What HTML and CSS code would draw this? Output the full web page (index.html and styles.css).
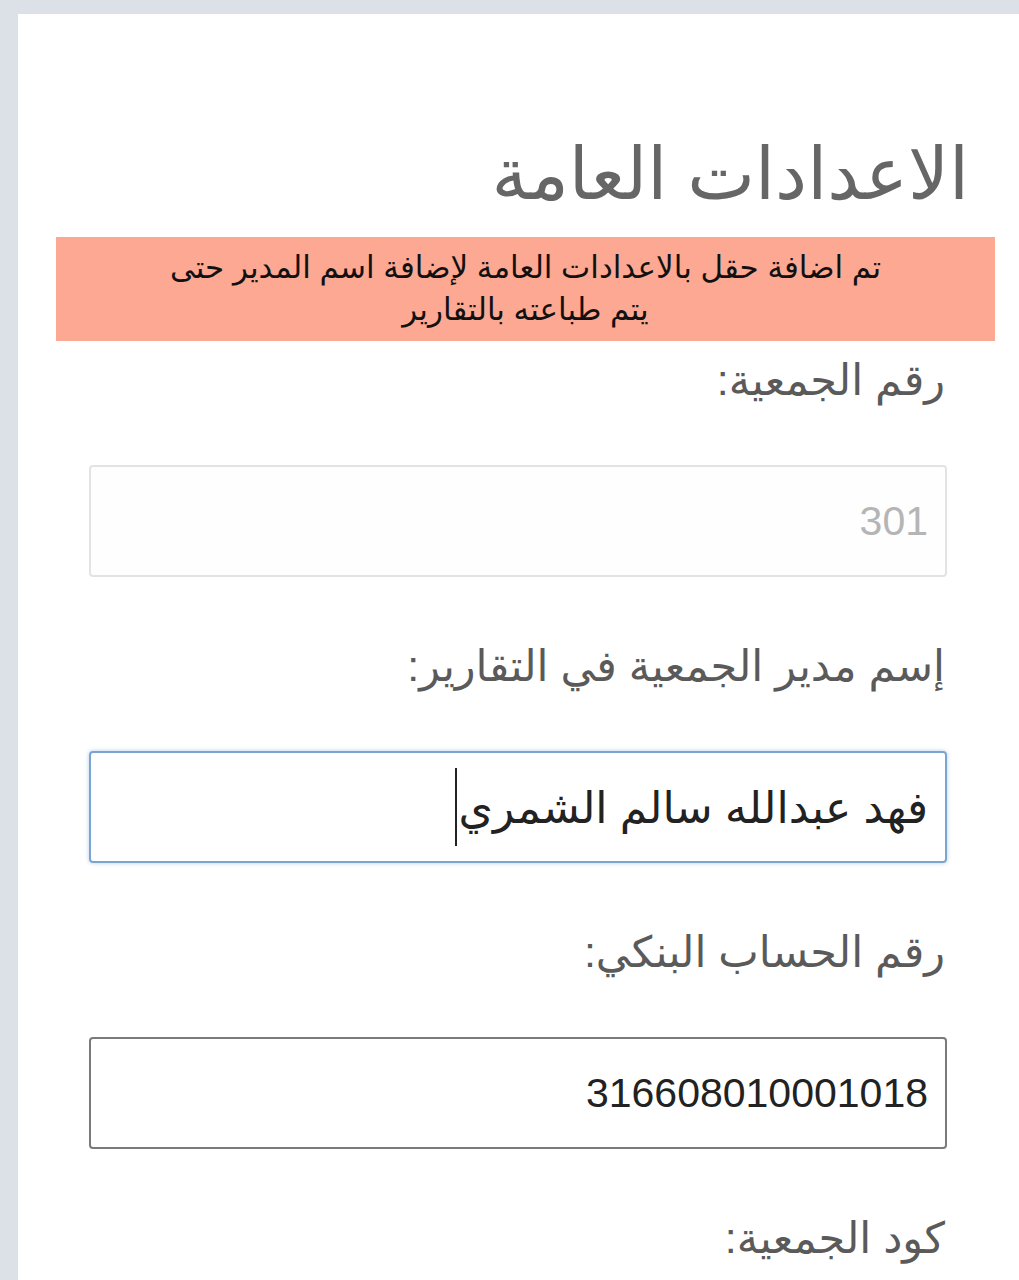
FILE: index.html
```html
<!DOCTYPE html>
<html lang="ar" dir="rtl">
<head>
    <meta charset="UTF-8">
    <meta name="viewport" content="width=device-width, initial-scale=1.0">
    <title>الاعدادات العامة</title>
    <link rel="stylesheet" href="styles.css">
</head>
<body>
<div class="card">
    <h1 class="page-title">الاعدادات العامة</h1>

    <div class="notice">
        تم اضافة حقل بالاعدادات العامة لإضافة اسم المدير حتى<br>
        يتم طباعته بالتقارير
    </div>

    <form class="settings-form">
        <div class="form-group">
            <label>رقم الجمعية:</label>
            <div class="field field-disabled">301</div>
        </div>
        <div class="form-group">
            <label>إسم مدير الجمعية في التقارير:</label>
            <div class="field field-focus">فهد عبدالله سالم الشمري<span class="caret"></span></div>
        </div>
        <div class="form-group">
            <label>رقم الحساب البنكي:</label>
            <div class="field field-dark">316608010001018</div>
        </div>
        <div class="form-group">
            <label>كود الجمعية:</label>
        </div>
    </form>
</div>
</body>
</html>
```

FILE: styles.css
```css
html, body {
    margin: 0;
    height: 100%;
}

body {
    background-color: #dce1e7;
    font-family: "Liberation Sans", "DejaVu Sans", sans-serif;
    padding: 14px 0 0 18px;
    box-sizing: border-box;
    overflow: hidden;
}

.card {
    background-color: #fff;
    min-height: 1300px;
    padding-top: 108px;
}

.page-title {
    margin: 0;
    padding-right: 50px;
    font-size: 72px;
    font-weight: normal;
    line-height: 104px;
    color: #666;
}

.notice {
    margin: 11px 24px 0 38px;
    background-color: #fca892;
    color: #111;
    text-align: center;
    font-size: 31px;
    line-height: 42px;
    padding: 10px 20px;
}

.settings-form {
    padding: 14px 72px 0 71px;
}

.form-group label {
    display: block;
    font-size: 43px;
    line-height: 50px;
    color: #5a5a5a;
    padding-right: 2px;
    margin-bottom: 60px;
}

.field {
    box-sizing: border-box;
    height: 112px;
    border: 2px solid #ccc;
    border-radius: 4px;
    padding: 0 17px;
    display: flex;
    align-items: center;
    font-size: 41px;
    color: #222;
    margin-bottom: 64px;
}

.field-disabled {
    border-color: #e3e3e3;
    color: #b5b5b5;
    background-color: #fefefe;
}

.field-focus {
    border-color: #7ba5d0;
    box-shadow: 0 0 4px rgba(102, 160, 216, 0.5);
    font-size: 44px;
}

.field-dark {
    border-color: #7a7a7a;
}

.caret {
    display: inline-block;
    width: 2px;
    height: 78px;
    background-color: #222;
    margin-right: 2px;
}
```
